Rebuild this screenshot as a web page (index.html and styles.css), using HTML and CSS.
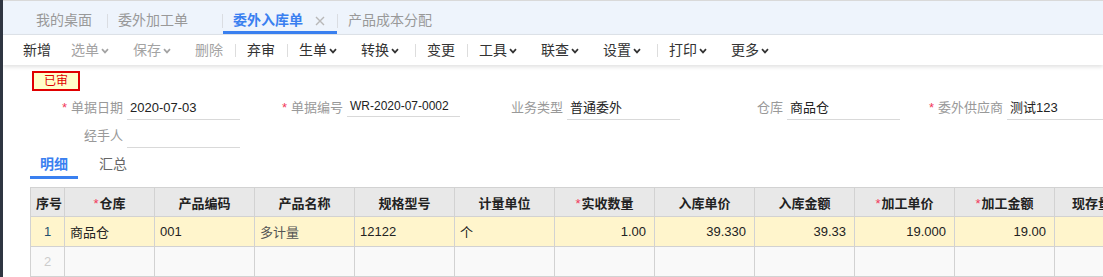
FILE: index.html
```html
<!DOCTYPE html>
<html lang="zh-CN">
<head>
<meta charset="utf-8">
<title>委外入库单</title>
<link rel="stylesheet" href="styles.css">
</head>
<body>
<div class="app">
  <div class="rail"></div>
  <div class="main">
    <div class="tabbar">
      <div class="tab home">我的桌面</div>
      <i class="tsep"></i>
      <div class="tab">委外加工单<svg class="close hidden" viewBox="0 0 10 10"><path d="M1 1L9 9M9 1L1 9"/></svg></div>
      <i class="tsep"></i>
      <div class="tab active">委外入库单<svg class="close" viewBox="0 0 10 10"><path d="M1 1L9 9M9 1L1 9"/></svg></div>
      <i class="tsep"></i>
      <div class="tab">产品成本分配<svg class="close hidden" viewBox="0 0 10 10"><path d="M1 1L9 9M9 1L1 9"/></svg></div>
    </div>

    <div class="toolbar">
      <span class="btn">新增</span>
      <span class="btn dis">选单<svg class="chev" viewBox="0 0 8 6"><path d="M1 1.2L4 4.4L7 1.2"/></svg></span>
      <span class="btn dis">保存<svg class="chev" viewBox="0 0 8 6"><path d="M1 1.2L4 4.4L7 1.2"/></svg></span>
      <span class="btn dis">删除</span>
      <i class="bsep"></i>
      <span class="btn">弃审</span>
      <i class="bsep"></i>
      <span class="btn">生单<svg class="chev" viewBox="0 0 8 6"><path d="M1 1.2L4 4.4L7 1.2"/></svg></span>
      <span class="btn">转换<svg class="chev" viewBox="0 0 8 6"><path d="M1 1.2L4 4.4L7 1.2"/></svg></span>
      <i class="bsep"></i>
      <span class="btn">变更</span>
      <i class="bsep"></i>
      <span class="btn">工具<svg class="chev" viewBox="0 0 8 6"><path d="M1 1.2L4 4.4L7 1.2"/></svg></span>
      <span class="btn">联查<svg class="chev" viewBox="0 0 8 6"><path d="M1 1.2L4 4.4L7 1.2"/></svg></span>
      <span class="btn">设置<svg class="chev" viewBox="0 0 8 6"><path d="M1 1.2L4 4.4L7 1.2"/></svg></span>
      <i class="bsep"></i>
      <span class="btn">打印<svg class="chev" viewBox="0 0 8 6"><path d="M1 1.2L4 4.4L7 1.2"/></svg></span>
      <span class="btn">更多<svg class="chev" viewBox="0 0 8 6"><path d="M1 1.2L4 4.4L7 1.2"/></svg></span>
    </div>

    <div class="form">
      <div class="badge">已审</div>
      <div class="fields">
        <div class="field"><span class="flabel"><b class="star">*</b>单据日期</span><span class="fval">2020-07-03</span></div>
        <div class="field"><span class="flabel"><b class="star">*</b>单据编号</span><span class="fval short">WR-2020-07-0002</span></div>
        <div class="field"><span class="flabel">业务类型</span><span class="fval">普通委外</span></div>
        <div class="field"><span class="flabel">仓库</span><span class="fval">商品仓</span></div>
        <div class="field"><span class="flabel"><b class="star">*</b>委外供应商</span><span class="fval">测试123</span></div>
        <div class="field"><span class="flabel">经手人</span><span class="fval"></span></div>
      </div>

      <div class="dtabs">
        <span class="dtab active">明细</span>
        <span class="dtab">汇总</span>
      </div>

      <div class="gridwrap">
        <table class="grid">
          <colgroup>
            <col class="c-no"><col class="c-wh"><col class="c-w"><col class="c-w"><col class="c-w"><col class="c-w"><col class="c-w"><col class="c-w"><col class="c-w"><col class="c-w"><col class="c-w"><col class="c-w">
          </colgroup>
          <thead>
            <tr>
              <th>序号</th>
              <th><b class="star">*</b>仓库</th>
              <th>产品编码</th>
              <th>产品名称</th>
              <th>规格型号</th>
              <th>计量单位</th>
              <th><b class="star">*</b>实收数量</th>
              <th>入库单价</th>
              <th>入库金额</th>
              <th><b class="star">*</b>加工单价</th>
              <th><b class="star">*</b>加工金额</th>
              <th>现存量数量</th>
            </tr>
          </thead>
          <tbody>
            <tr class="sel">
              <td class="no">1</td>
              <td>商品仓</td>
              <td>001</td>
              <td class="ro">多计量</td>
              <td>12122</td>
              <td>个</td>
              <td class="num">1.00</td>
              <td class="num">39.330</td>
              <td class="num">39.33</td>
              <td class="num">19.000</td>
              <td class="num">19.00</td>
              <td></td>
            </tr>
            <tr class="empty">
              <td class="no">2</td>
              <td></td><td></td><td></td><td></td><td></td><td></td><td></td><td></td><td></td><td></td><td></td>
            </tr>
          </tbody>
        </table>
      </div>
    </div>
  </div>
</div>
</body>
</html>
```

FILE: styles.css
```css
html, body {
  margin: 0;
  padding: 0;
  background: #ffffff;
  overflow: hidden;
}

body {
  font-family: "Liberation Sans", "Noto Sans CJK SC", sans-serif;
  font-size: 13px;
  color: #333333;
}

.app {
  display: flex;
  width: 1103px;
  height: 277px;
}

.rail {
  flex: none;
  width: 3px;
  background: #2f3541;
}

.main {
  flex: 1;
  min-width: 0;
  overflow: hidden;
  border-top: 1px solid #d9d9d9;
}

/* ---------- top tab bar ---------- */
.tabbar {
  display: flex;
  align-items: flex-end;
  height: 33px;
  padding-left: 18px;
  background: #eef4fc;
  border-bottom: 1px solid #dfe4ea;
}

.tab {
  display: flex;
  align-items: center;
  height: 21px;
  padding: 9px 12px 0 10px;
  line-height: 21px;
  font-size: 14px;
  color: #999999;
  border-bottom: 3px solid transparent;
  white-space: nowrap;
}

.tab.home {
  padding-left: 15px;
  padding-right: 15px;
}

.tab.active {
  color: #3a80f0;
  font-weight: bold;
  border-bottom-color: #3a80f0;
}

.close {
  width: 10px;
  height: 10px;
  margin-left: 12px;
  fill: none;
  stroke: #b8b8b8;
  stroke-width: 1.4;
}

.close.hidden {
  visibility: hidden;
}

.tsep {
  flex: none;
  width: 1px;
  height: 14px;
  margin-bottom: 6px;
  background: #dadde2;
}

/* ---------- toolbar ---------- */
.toolbar {
  position: relative;
  z-index: 1;
  display: flex;
  align-items: center;
  height: 30px;
  padding-left: 10px;
  background: #ffffff;
  box-shadow: 0 2px 4px rgba(0, 0, 0, 0.12);
}

.btn {
  display: flex;
  align-items: center;
  padding: 0 10px;
  font-size: 14px;
  line-height: 30px;
  color: #333333;
  white-space: nowrap;
}

.btn.dis {
  color: #a3a3a3;
}

.chev {
  width: 8px;
  height: 6px;
  margin: 1px 4px 0 2px;
  fill: none;
  stroke: #333333;
  stroke-width: 1.7;
}

.btn.dis .chev {
  stroke: #a3a3a3;
}

.bsep {
  flex: none;
  width: 1px;
  height: 13px;
  margin: 0 1px 0 2px;
  background: #dddddd;
}

/* ---------- form ---------- */
.form {
  padding-top: 6px;
}

.badge {
  width: 44px;
  height: 16px;
  margin-left: 29px;
  border: 2px solid #e00000;
  background: #ffffc8;
  color: #e00000;
  font-size: 12px;
  line-height: 16px;
  text-align: center;
}

.fields {
  display: grid;
  grid-template-columns: repeat(5, 220px);
  row-gap: 4px;
  margin: 5px 0 0 17px;
}

.field {
  display: flex;
  height: 24px;
}

.flabel {
  flex: none;
  width: 103px;
  margin-right: 4px;
  text-align: right;
  line-height: 24px;
  color: #999999;
  white-space: nowrap;
}

.star {
  font-weight: normal;
  color: #f2385a;
  margin-right: 4px;
}

.fval {
  flex: none;
  box-sizing: border-box;
  width: 113px;
  height: 24px;
  padding-left: 3px;
  line-height: 23px;
  color: #222222;
  border-bottom: 1px solid #d9d9d9;
  white-space: nowrap;
}

.fval.short {
  height: 21px;
  line-height: 20px;
  font-size: 12px;
}

/* ---------- detail tabs ---------- */
.dtabs {
  display: flex;
  gap: 11px;
  margin: 4px 0 0 27px;
}

.dtab {
  padding: 0 10px;
  height: 24px;
  line-height: 24px;
  font-size: 14px;
  color: #666666;
  border-bottom: 3px solid transparent;
}

.dtab.active {
  color: #3a80f0;
  font-weight: bold;
  border-bottom-color: #3a80f0;
}

/* ---------- grid ---------- */
.gridwrap {
  margin: 8px 0 0 27px;
  overflow: hidden;
}

.grid {
  border-collapse: collapse;
  table-layout: fixed;
  width: 1124px;
}

.c-no { width: 34px; }
.c-wh { width: 90px; }
.c-w { width: 100px; }

.grid th,
.grid td {
  border: 1px solid #d2d2d2;
  padding: 0 5px;
  white-space: nowrap;
  overflow: hidden;
}

.grid th {
  height: 28px;
  background: #e8e8e8;
  font-weight: bold;
  color: #222222;
  text-align: center;
}

.grid td {
  height: 29px;
  color: #222222;
  text-align: left;
}

.grid th .star {
  margin-right: 1px;
}

.grid tr.sel td {
  background: #fff5cc;
}

.grid tr.empty td {
  background: #f9f9f9;
}

.grid td.no {
  text-align: center;
  padding: 0;
  color: #1f4e6e;
}

.grid tr.empty td.no {
  color: #cccccc;
}

.grid td.ro {
  color: #555555;
}

.grid td.num {
  text-align: right;
  padding-right: 8px;
}
```
